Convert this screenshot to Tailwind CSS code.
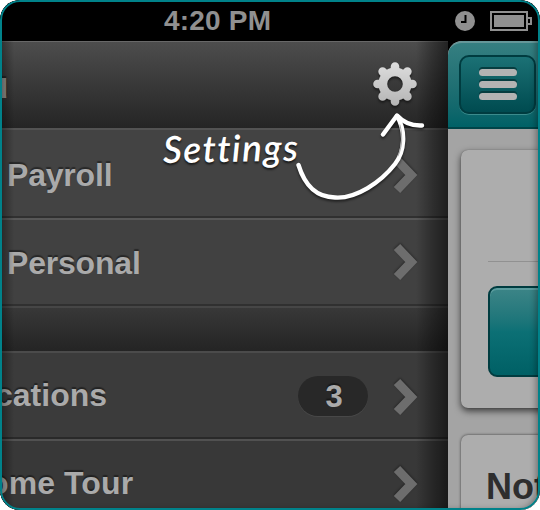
<!DOCTYPE html>
<html lang="en">
<head>
<meta charset="utf-8">
<title>Menu</title>
<script src="https://cdn.jsdelivr.net/npm/@tailwindcss/browser@4"></script>
</head>
<body class="bg-white">
<div class="relative flex h-[510px] w-[540px] flex-col overflow-hidden rounded-[20px] bg-black font-['Liberation_Sans',Arial,sans-serif] font-bold text-[#aaa]">

  <!-- Status bar -->
  <header class="flex h-[41px] shrink-0 items-center bg-black pl-[164px] text-[#909090]">
    <span class="w-[291px] text-[28px] leading-[41px] tracking-[0.2px] whitespace-nowrap">4:20 PM</span>
    <svg class="h-5 w-5 shrink-0" viewBox="0 0 20 20"><circle cx="10" cy="10" r="10" fill="#909090"/><path d="M10.5 4v7H6" fill="none" stroke="#000" stroke-width="2"/></svg>
    <svg class="ml-[15px] h-5 w-[42px] shrink-0" viewBox="0 0 42 20" fill="none"><rect x="1" y="1" width="36" height="18" stroke="#909090" stroke-width="2"/><path d="M4 4h30v12H4z" fill="#909090"/><path d="M38 7h3v6h-3" stroke="#909090" stroke-width="2"/></svg>
  </header>

  <div class="flex h-[469px] bg-black">
    <!-- Side menu -->
    <nav class="relative w-[448px] shrink-0 overflow-hidden text-[32px] leading-none text-shadow-[0_-2px_1px_rgb(0_0_0/0.4)]">
      <div class="relative flex h-[87px] items-center justify-end border-t border-[#686868] bg-linear-to-b from-[#4d4d4d] to-[#252525] pr-[31px]">
        <span class="absolute top-[25px] left-[-14px] text-[37px] text-[#999]">u</span>
        <svg class="mb-[3px] h-11 w-11 drop-shadow-[0_2px_1px_rgb(0_0_0/0.5)]" viewBox="-22 -22 44 44">
          <defs><linearGradient id="g" x1="0" y1="-22" x2="0" y2="22" gradientUnits="userSpaceOnUse"><stop stop-color="#dedede"/><stop offset="1" stop-color="#b4b4b4"/></linearGradient></defs>
          <g stroke="url(#g)" fill="none"><circle r="12.2" stroke-width="8.800"/>
          <path d="M0-14L.01-17.500M0 14L.01 17.500M14 0L17.500.01M-14 0L-17.500.01M10-10L12.400-12.400M10 10L12.400 12.400M-10 10L-12.400 12.400M-10-10L-12.400-12.400" stroke-width="8.6" stroke-linecap="round"/></g>
        </svg>
      </div>
      <div class="flex h-[90px] items-center justify-between border-t-2 border-b-2 border-t-[#535353] border-b-[#303030] bg-[#434343] pr-[30px] pl-[7px]">
        <span class="pt-[3px] tracking-[-0.2px]">Payroll</span>
        <svg class="mt-1 h-[38px] w-[25px] drop-shadow-[0_-1px_1px_rgb(0_0_0/0.4)]" viewBox="0 0 25 38"><path d="M4 4L18.300 19L4 34" fill="none" stroke="#6d6d6d" stroke-width="8.800"/></svg>
      </div>
      <div class="flex h-[88px] items-center justify-between border-t-2 border-b-2 border-t-[#575757] border-b-[#303030] bg-[#414141] pr-[30px] pl-[7px]">
        <span class="pt-[2px] tracking-[-0.2px]">Personal</span>
        <svg class="h-[38px] w-[25px] drop-shadow-[0_-1px_1px_rgb(0_0_0/0.4)]" viewBox="0 0 25 38"><path d="M4 4L18.300 19L4 34" fill="none" stroke="#6d6d6d" stroke-width="8.800"/></svg>
      </div>
      <div class="h-[45px] border-t-2 border-[#464646] bg-linear-to-b from-[#383838] to-[#242424]"></div>
      <div class="flex h-[88px] items-center border-t-2 border-b-2 border-t-[#4b4b4b] border-b-[#292929] bg-[#3b3b3b] pr-[30px]">
        <span class="-ml-[5px]">cations</span>
        <span class="mt-[2px] ml-auto flex h-[40px] w-[70px] items-center justify-center rounded-full bg-[#282828] pt-px pl-[2px] text-[31px] shadow-[0_1px_0_#484848]">3</span>
        <svg class="mt-[3px] ml-[25px] h-[38px] w-[25px] drop-shadow-[0_-1px_1px_rgb(0_0_0/0.4)]" viewBox="0 0 25 38"><path d="M4 4L18.300 19L4 34" fill="none" stroke="#6d6d6d" stroke-width="8.800"/></svg>
      </div>
      <div class="flex h-[88px] items-center justify-between border-t-2 border-[#515151] bg-[#383838] pr-[30px]">
        <span class="-ml-[11px] pb-[3px] tracking-[0.1px] whitespace-nowrap">ome Tour</span>
        <svg class="h-[38px] w-[25px] drop-shadow-[0_-1px_1px_rgb(0_0_0/0.4)]" viewBox="0 0 25 38"><path d="M4 4L18.300 19L4 34" fill="none" stroke="#6d6d6d" stroke-width="8.800"/></svg>
      </div>
      <div class="absolute inset-y-0 right-0 w-[32px] bg-linear-to-r from-transparent via-black/30 to-black/55"></div>
      <div class="absolute inset-y-0 left-0 w-[14px] bg-linear-to-r from-black/40 to-transparent"></div>
    </nav>

    <!-- Main screen, pushed aside -->
    <main class="h-full w-[92px] shrink-0 overflow-hidden rounded-tl-[14px] bg-[#a4a4a4]">
      <div class="h-[88px] rounded-tl-[14px] border-t-2 border-b-2 border-t-[#659799] border-b-[#004448] bg-linear-to-b from-[#357f81] to-[#006166] pt-[12px] pl-[11px]">
        <div class="flex h-[59px] w-[77px] flex-col items-center justify-center gap-[5px] rounded-[10px] border-2 border-[#003c40] bg-linear-to-b from-[#1b7175] to-[#004b50] shadow-[0_1px_0_#3b8b8c]">
          <div class="h-[7px] w-[38px] rounded-full bg-[#b3b3b3] shadow-[0_-2px_0_#063d40]"></div>
          <div class="h-[7px] w-[38px] rounded-full bg-[#b3b3b3] shadow-[0_-2px_0_#063d40]"></div>
          <div class="h-[7px] w-[38px] rounded-full bg-[#b3b3b3] shadow-[0_-2px_0_#063d40]"></div>
        </div>
      </div>
      <div class="pt-[21px] pl-[13px]">
        <div class="h-[258px] w-[100px] rounded-[7px] bg-[#adadad] pt-[111px] pl-[27px] shadow-[0_3px_7px_rgb(0_0_0/0.65),0_0_1px_#666]">
          <div class="h-[25px] border-t border-[#919191]"></div>
          <div class="h-[91px] w-[100px] rounded-[9px] border-2 border-[#003c40] bg-linear-to-b from-[#3c8587] via-[#0c7075] via-50% to-[#006065] shadow-[inset_0_2px_0_#5b9c9e]"></div>
        </div>
        <div class="mt-[27px] h-[100px] w-[100px] rounded-[7px] bg-[#adadad] pt-[34px] pl-[25px] text-[36px] leading-[36px] text-[#2e2e2e] shadow-[0_0_3px_rgb(0_0_0/0.65)]">Not</div>
      </div>
    </main>
  </div>

  <!-- Handwritten callout -->
  <div class="absolute top-[129px] left-[163px] origin-left rotate-[-1deg] font-[Lato,sans-serif] text-[37px] leading-[40px] font-semibold text-white italic text-shadow-[0_2px_2px_rgb(0_0_0/0.6)]"><span class="inline-block tracking-[1.4px]">Settings</span></div>
  <svg class="absolute top-[100px] left-[280px] h-[110px] w-[160px] drop-shadow-[0_2px_1px_rgb(0_0_0/0.5)]" viewBox="0 0 160 110" fill="none" stroke="#fff" stroke-linecap="round" stroke-linejoin="round">
    <path d="M18.500 65C25 86 36 97 55 97.500C76 99 101 82 115 64C125 51 126 31 117 16" stroke-width="4.400"/>
    <path d="M103 34.500L117 15.500C123 22 132 26 142 25.500" stroke-width="4.400"/>
    <path d="M120 25C123 38 122 47 118 56" stroke="#777" stroke-width=".6"/>
  </svg>

  <!-- Frame outline -->
  <div class="pointer-events-none absolute inset-0 rounded-[20px] border-2 border-[#00828a] shadow-[inset_-4px_0_6px_-2px_rgb(0_0_0/0.35)]"></div>
</div>
</body>
</html>
